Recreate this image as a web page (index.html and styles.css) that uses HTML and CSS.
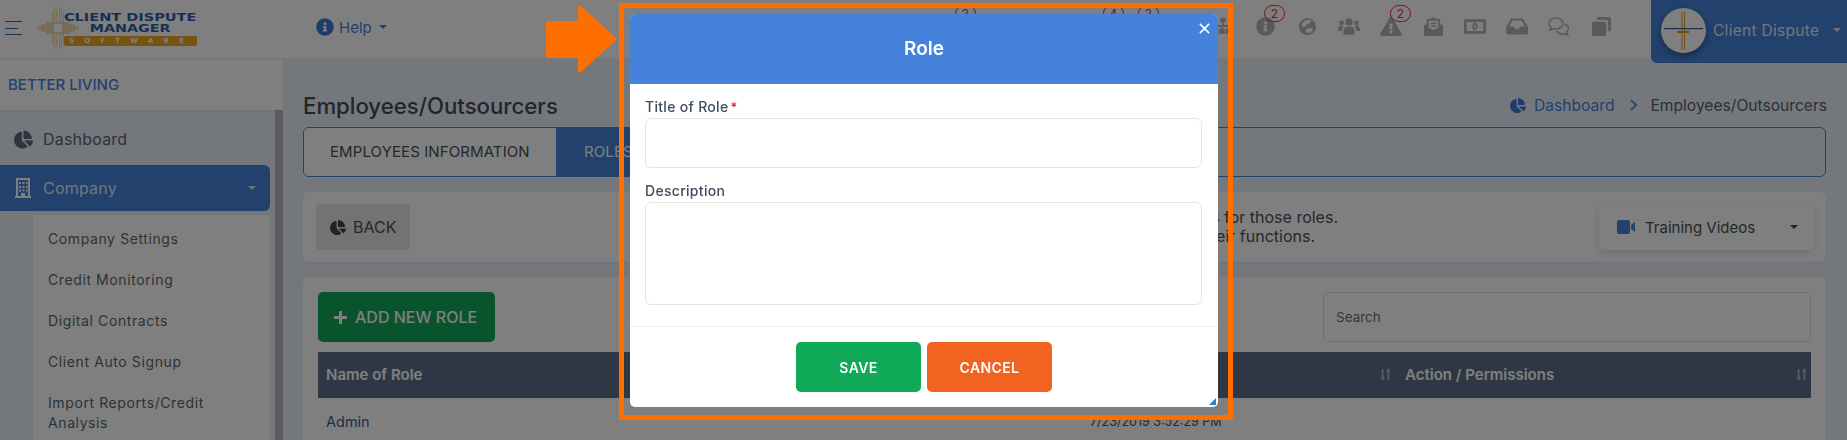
FILE: index.html
```html
<!DOCTYPE html>
<html lang="en">
<head>
<meta charset="utf-8">
<title>Employees/Outsourcers</title>
<link rel="stylesheet" href="styles.css">
</head>
<body>
<svg class="defs" aria-hidden="true">
  <symbol id="pie" viewBox="0 0 544 512"><path d="M527.79 288H290.5l158.03 158.03c6.04 6.04 15.98 6.53 22.19.68 38.7-36.46 65.32-85.61 73.13-140.86 1.34-9.46-6.51-17.85-16.06-17.85zm-15.83-64.8C503.72 103.74 408.26 8.28 288.8.04 279.68-.59 272 7.1 272 16.24V240h223.77c9.14 0 16.82-7.68 16.19-16.8zM224 288V50.71c0-9.55-8.39-17.4-17.84-16.06C86.99 51.49-4.1 155.6.14 280.37 4.5 408.51 114.83 513.59 243.03 511.98c50.4-.63 96.97-16.87 135.26-44.03 7.9-5.6 8.42-17.23 1.57-24.08L224 288z"/></symbol>
  <symbol id="info" viewBox="0 0 512 512"><path d="M256 8C119.043 8 8 119.083 8 256c0 136.997 111.043 248 248 248s248-111.003 248-248C504 119.083 392.957 8 256 8zm0 110c23.196 0 42 18.804 42 42s-18.804 42-42 42-42-18.804-42-42 18.804-42 42-42zm56 254c0 6.627-5.373 12-12 12h-88c-6.627 0-12-5.373-12-12v-24c0-6.627 5.373-12 12-12h12v-64h-12c-6.627 0-12-5.373-12-12v-24c0-6.627 5.373-12 12-12h64c6.627 0 12 5.373 12 12v100h12c6.627 0 12 5.373 12 12v24z"/></symbol>
  <symbol id="warn" viewBox="0 0 576 512"><path d="M569.517 440.013C587.975 472.007 564.806 512 527.94 512H48.054c-36.937 0-59.999-40.055-41.577-71.987L246.423 23.985c18.467-32.009 64.72-31.951 83.154 0l239.94 416.028zM288 354c-25.405 0-46 20.595-46 46s20.595 46 46 46 46-20.595 46-46-20.595-46-46-46zm-43.673-165.346l7.418 136c.347 6.364 5.609 11.346 11.982 11.346h48.546c6.373 0 11.635-4.982 11.982-11.346l7.418-136c.375-6.874-5.098-12.654-11.982-12.654h-63.383c-6.884 0-12.356 5.78-11.981 12.654z"/></symbol>
  <symbol id="sort" viewBox="0 0 14 14"><path d="M3 1h2v9h2L4 14 1 10h2zM10 0l3 4h-2v9H9V4H7z"/></symbol>
</svg>

<div class="app">
  <header class="topbar">
    <div class="burger"><i></i><i class="short"></i><i></i></div>
    <div class="logo">
      <svg class="logo-star" viewBox="0 0 42 42" width="42" height="42">
        <g fill="#efd9ae">
          <rect x="17" y="0" width="1" height="42"/><rect x="19" y="2" width="1" height="38"/><rect x="22" y="2" width="1" height="38"/><rect x="24" y="0" width="1" height="42"/>
          <rect x="15" y="5" width="1" height="32"/><rect x="26" y="5" width="1" height="32"/>
          <rect x="0" y="19.500" width="42" height="3"/><rect x="4" y="17.500" width="34" height="7"/><rect x="9" y="15" width="24" height="12"/>
        </g>
        <rect x="17" y="17" width="8" height="8" fill="#fff"/>
      </svg>
      <div class="logo-words">
        <span class="logo-line">CLIENT DISPUTE</span>
        <span class="logo-line logo-second">MANAGER</span>
        <span class="logo-bar">SOFTWARE</span>
      </div>
    </div>
    <div class="help">
      <svg class="help-icon"><use href="#info"/></svg>
      <span>Help</span>
      <b class="caret"></b>
    </div>
    <div class="hdr-icons">
      <span class="hi hi-a"><em class="badge">2</em></span>
      <span class="hi hi-b"><em class="badge">4</em></span>
      <span class="hi"><em class="badge">2</em></span>
      <span class="hi"></span>
      <span class="hi">
        <svg class="ic ic-s" viewBox="0 0 20 20"><path d="M7 1h6v5h-2v3h6v4h2v6h-6v-6h2v-2h-5v2h2v6H6v-6h2v-2H3v2h2v6h-6v-6h2V9h8V6H7z"/></svg>
      </span>
      <span class="hi">
        <svg class="ic"><use href="#info"/></svg><em class="badge">2</em>
      </span>
      <span class="hi">
        <svg class="ic" viewBox="0 0 20 20"><path fill-rule="evenodd" d="M10 1a9 9 0 1 0 0 18 9 9 0 0 0 0-18zM7 4l4-1 3 1-2 3-3 1-1 2-3 1-1-2 1-3zm1 9 5-2 3 2-2 3-3 1-3-2z"/></svg>
      </span>
      <span class="hi">
        <svg class="ic ic-w" viewBox="0 0 24 20"><circle cx="12" cy="5" r="4"/><circle cx="4" cy="6" r="2.600"/><circle cx="20" cy="6" r="2.600"/><path d="M6 19v-4c0-3 2-5 6-5s6 2 6 5v4zM0 14c0-3 1-5 4-5l2 1c-1 1-2 3-2 5H0zM24 14c0-3-1-5-4-5l-2 1c1 1 2 3 2 5h4z"/></svg>
      </span>
      <span class="hi">
        <svg class="ic ic-w"><use href="#warn"/></svg><em class="badge">2</em>
      </span>
      <span class="hi">
        <svg class="ic" viewBox="0 0 20 20"><path fill-rule="evenodd" d="M10 0l3 2h4v5l3 2v11H0V9l3-2V2h4zM5 4v7l5 3 5-3V4zm2 2h6v1.500H7zm0 3h6v1.500H7z"/></svg>
      </span>
      <span class="hi">
        <svg class="ic ic-w" viewBox="0 0 24 16"><path fill-rule="evenodd" d="M0 0h24v16H0zm3 3v10h18V3zm9 1c2 0 3 2 3 4s-1 4-3 4-3-2-3-4 1-4 3-4zm0 2c-.7 0-1 1-1 2s.3 2 1 2 1-1 1-2-.3-2-1-2z"/></svg>
      </span>
      <span class="hi">
        <svg class="ic ic-w" viewBox="0 0 22 16"><path d="M5 0h12l5 9v5a2 2 0 0 1-2 2H2a2 2 0 0 1-2-2V9zm1.500 2L3 8h5l1.500 2.500h3L14 8h5l-3.500-6z"/></svg>
      </span>
      <span class="hi">
        <svg class="ic-line" viewBox="0 0 22 20"><path d="M8 1c4 0 7 2.500 7 5.500S12 12 8 12c-1 0-2 0-3-.5L2 13l1-3C2 9 1 8 1 6.500 1 3.500 4 1 8 1z"/><path d="M16.500 7c2.500 1 4 2.500 4 4.500 0 1.500-.8 2.500-1.800 3.500l1 3-3.200-1.500c-3 1-6 0-7.500-2.500"/></svg>
      </span>
      <span class="hi">
        <svg class="ic" viewBox="0 0 20 20"><path d="M6 0h12a2 2 0 0 1 2 2v11a2 2 0 0 1-2 2h-1V6a3 3 0 0 0-3-3H5V1zM2 5h11a2 2 0 0 1 2 2v11a2 2 0 0 1-2 2H2a2 2 0 0 1-2-2V7a2 2 0 0 1 2-2z"/></svg>
      </span>
    </div>
    <div class="profile">
      <div class="avatar">
        <svg viewBox="0 0 45 45" width="45" height="45">
          <rect x="20.500" y="4" width="1" height="38" fill="#e0a020"/><rect x="23" y="4" width="1" height="38" fill="#e0a020"/>
          <rect x="3" y="20" width="39" height="1.200" fill="#3b5c94"/><rect x="16" y="23" width="12" height="2" fill="#e0a020"/>
        </svg>
      </div>
      <span class="profile-name">Client Dispute</span>
      <b class="caret caret-light"></b>
    </div>
  </header>

  <div class="below">
    <aside class="side">
      <div class="side-brand">BETTER LIVING</div>
      <div class="side-body">
        <nav class="side-nav">
          <a class="nav-item"><svg class="nav-ic"><use href="#pie"/></svg>Dashboard</a>
          <a class="nav-item nav-active">
            <svg class="nav-ic" viewBox="0 0 16 20"><path fill-rule="evenodd" d="M1 0h14v18h1v2H0v-2h1zm2 2v16h3v-3h4v3h3V2zm1 2h2v2H4zm3.500 0h2v2h-2zM11 4h1.500v2H11zM4 8h2v2H4zm3.500 0h2v2h-2zM11 8h1.500v2H11zM4 11.500h2v2H4zm3.500 0h2v2h-2zm3.500 0h1.500v2H11z"/></svg>
            Company<b class="caret caret-light nav-caret"></b>
          </a>
          <div class="sub">
            <a>Company Settings</a>
            <a>Credit Monitoring</a>
            <a>Digital Contracts</a>
            <a>Client Auto Signup</a>
            <a>Import Reports/Credit Analysis</a>
          </div>
        </nav>
        <div class="scrollbar"></div>
      </div>
    </aside>

    <main class="main">
      <div class="title-row">
        <h1>Employees/Outsourcers</h1>
        <div class="crumbs">
          <svg class="crumb-ic"><use href="#pie"/></svg>
          <a>Dashboard</a>
          <svg class="crumb-sep" viewBox="0 0 7 12"><path d="M1 1l5 5-5 5"/></svg>
          <span>Employees/Outsourcers</span>
        </div>
      </div>
      <div class="tabs">
        <a class="tab">EMPLOYEES INFORMATION</a>
        <a class="tab tab-on">ROLES</a>
      </div>
      <section class="card card-top">
        <button class="back"><svg class="back-ic"><use href="#pie"/></svg>BACK</button>
        <div class="note">
          <span>Create roles for your employees and set permissions for those roles.</span>
          <span class="note-second">Assign employees to roles according to their functions.</span>
        </div>
        <div class="training">
          <svg class="video" viewBox="0 0 18 14"><path d="M0 2a2 2 0 0 1 2-2h9a2 2 0 0 1 2 2v10a2 2 0 0 1-2 2H2a2 2 0 0 1-2-2zM14 5l4-3v10l-4-3z"/></svg>
          <span>Training Videos</span>
          <b class="caret caret-dark"></b>
        </div>
      </section>
      <section class="card card-list">
        <div class="list-tools">
          <button class="add"><svg class="plus" viewBox="0 0 13 13"><path d="M5 0h3v5h5v3H8v5H5V8H0V5h5z"/></svg>ADD NEW ROLE</button>
          <div class="search">Search</div>
        </div>
        <div class="grid grid-head">
          <div class="cell">Name of Role</div>
          <div class="cell">Created Date<svg class="sort sort-mid"><use href="#sort"/></svg></div>
          <div class="cell cell-action">Action / Permissions<svg class="sort"><use href="#sort"/></svg></div>
        </div>
        <div class="grid grid-row">
          <div class="cell link">Admin</div>
          <div class="cell cell-date">7/23/2019 3:52:29 PM</div>
          <div class="cell"></div>
        </div>
      </section>
    </main>
  </div>
</div>

<div class="backdrop"></div>

<div class="highlight"></div>
<svg class="arrow" viewBox="0 0 71 68" width="71" height="68"><path d="M0 16h32V2c0-2 2-2.500 3-1l36 33-36 33c-1 1.500-3 1-3-1V53H0z"/></svg>

<div class="modal">
  <div class="modal-head">
    <h2>Role</h2>
    <svg class="close" viewBox="0 0 12 12"><path d="M1 1l10 10M11 1L1 11"/></svg>
  </div>
  <form class="modal-body">
    <label class="lbl">Title of Role<span class="req">*</span></label>
    <div class="field field-input"></div>
    <label class="lbl lbl-next">Description</label>
    <div class="field field-area"></div>
  </form>
  <div class="modal-foot">
    <button class="btn btn-save">SAVE</button>
    <button class="btn btn-cancel">CANCEL</button>
  </div>
  <svg class="resize" viewBox="0 0 8 8"><path d="M8 0v8H0z"/></svg>
</div>
</body>
</html>
```

FILE: styles.css
```css
* { box-sizing: border-box; }
html, body { margin: 0; height: 440px; overflow: hidden; }
body { font-family: Inter, "Liberation Sans", sans-serif; color: #4a4f57; background: #e9f1f8; font-size: 14px; }
h1, h2 { margin: 0; font-weight: 500; }
a { display: block; }
button { font-family: inherit; border: 0; }
.defs { position: absolute; width: 0; height: 0; }

.app { height: 440px; display: flex; flex-direction: column; }

/* top bar */
.topbar { height: 60px; flex: none; display: flex; background: #fff; border-bottom: 2px solid #eceef0; position: relative; z-index: 2; }
.burger { width: 17px; flex: none; margin: 21px 0 0 5px; display: flex; flex-direction: column; gap: 5.500px; }
.burger i { display: block; height: 1px; background: #3568b5; }
.burger .short { width: 13px; }
.logo { margin: 7px 0 0 15px; width: 160px; flex: none; display: flex; height: 42px; }
.logo-star { flex: none; }
.logo-words { margin-left: -15px; padding-top: 5px; width: 133px; flex: none; display: flex; flex-direction: column; align-items: center; font-family: "DejaVu Sans", sans-serif; font-weight: 700; color: #2f5fa8; }
.logo-line { font-size: 11px; line-height: 11px; transform: scaleX(1.320); white-space: nowrap; }
.logo-second { transform: scaleX(1.300); }
.logo-bar { margin-top: 2px; width: 133px; height: 10px; border-radius: 2px; background: #f0a51e; color: #fff; font-size: 7px; line-height: 10px; letter-spacing: 10.200px; padding-left: 5px; white-space: nowrap; }
.help { display: flex; align-items: center; height: 54px; margin-left: 119px; color: #4582db; font-size: 15px; flex: none; }
.help-icon { width: 18px; height: 18px; fill: #3f7bd6; margin-right: 5px; }
.caret { display: inline-block; width: 0; height: 0; border: 4px solid transparent; border-top: 4px solid #4582db; border-bottom: 0; margin-left: 7px; }
.caret-light { border-top-color: #dfe7f3; }
.caret-dark { border-top-color: #4a4f57; }

.hdr-icons { flex: 1; display: flex; justify-content: flex-end; align-items: flex-start; height: 54px; padding: 17px 29px 0 0; }
.hi { position: relative; display: flex; justify-content: center; width: 42px; height: 20px; flex: none; }
.hi-a { width: 148px; }
.hi-b { width: 35px; }
.ic { width: 19px; height: 19px; fill: #b4b4b4; display: block; }
.ic-w { width: 22px; }
.ic-s { width: 18px; height: 18px; }
.ic-line { width: 22px; height: 20px; fill: none; stroke: #b4b4b4; stroke-width: 1.500; }
.badge { position: absolute; left: 20px; top: -12px; width: 21px; height: 17px; border: 1px solid #e02f36; border-radius: 9px; color: #e02f36; font-style: normal; font-size: 12px; line-height: 15px; text-align: center; }

.profile { flex: none; width: 196px; height: 63px; display: flex; align-items: center; padding: 0 8px 3px 10px; background: #4582db; border-radius: 0 0 0 6px; color: #e4ebf6; font-size: 15.500px; }
.avatar { width: 45px; height: 45px; border-radius: 50%; background: #fff; overflow: hidden; box-shadow: 0 3px 6px rgba(0,0,0,.35); flex: none; margin-right: 7px; }
.avatar svg { display: block; }
.profile-name { white-space: nowrap; letter-spacing: .3px; }
.profile .caret { margin-left: 14px; }

/* body */
.below { flex: 1; display: flex; min-height: 0; overflow: hidden; }
.side { width: 283px; flex: none; display: flex; flex-direction: column; }
.side-brand { height: 50px; flex: none; background: #fff; color: #4582db; font-weight: 500; font-size: 15px; line-height: 50px; padding-left: 8px; box-shadow: 0 1px 3px rgba(0,0,0,.08); }
.side-body { flex: 1; display: flex; min-height: 0; }
.side-nav { flex: 1; padding-top: 6px; }
.scrollbar { width: 8px; background: #b6b6b6; }
.nav-item { height: 46px; width: 270px; display: flex; align-items: center; font-size: 16px; letter-spacing: .2px; color: #5d646d; padding-left: 14px; }
.nav-ic { width: 19px; height: 19px; fill: #5d6a78; margin-right: 10px; flex: none; }
.nav-active { margin-top: 3px; background: #4582db; color: #e4ebf6; border-radius: 0 6px 6px 0; }
.nav-active .nav-ic { width: 16px; height: 20px; margin: 0 12px 0 1px; fill: #fff; }
.nav-caret { margin-left: auto; margin-right: 14px; }
.sub { margin: 4px 0 0 33px; width: 237px; background: #fff; padding-top: 4px; height: 300px; }
.sub a { padding: 10px 30px 11px 15px; font-size: 14px; letter-spacing: .6px; line-height: 20px; color: #5d646d; }

.main { flex: 1; min-width: 0; padding: 31px 21px 0 20px; }
.title-row { display: flex; justify-content: space-between; align-items: center; height: 28px; }
h1 { font-size: 22.200px; color: #454a52; }
.crumbs { display: flex; align-items: center; font-size: 15.600px; color: #5a5f66; margin-right: -1px; }
.crumbs a { color: #4582db; }
.crumb-ic { width: 16px; height: 15px; fill: #3f7bd6; margin-right: 8px; }
.crumb-sep { width: 7px; height: 12px; margin: 0 13px 0 16px; fill: none; stroke: #4582db; stroke-width: 1.600; }
.tabs { margin-top: 8px; height: 50px; border: 1px solid #4582db; border-radius: 6px; display: flex; overflow: hidden; font-size: 15px; letter-spacing: .1px; }
.tab { padding: 0 26px; line-height: 48px; white-space: nowrap; }
.tab.tab-on { background: #4582db; color: #fff; padding: 0 28px; }
.tab:first-child { width: 252px; background: #fff; color: #4a4f57; }

.card { background: #fff; border-radius: 6px; margin-top: 15px; box-shadow: 0 1px 3px rgba(0,0,0,.05); }
.card-top { height: 70px; display: flex; align-items: center; padding: 0 12px 0 13px; }
.back { width: 94px; height: 46px; background: #e6e6e6; border-radius: 4px; display: flex; align-items: center; padding: 0 0 0 14px; font-size: 16px; color: #4a4f57; flex: none; }
.back-ic { width: 16px; height: 15px; fill: #3d4652; margin-right: 7px; }
.note { margin-left: auto; display: flex; flex-direction: column; align-items: flex-end; font-size: 16px; line-height: 19.500px; white-space: nowrap; }
.note-second { padding-right: 23px; }
.training { flex: none; margin-left: 261px; width: 215px; height: 46px; border-radius: 6px; background: #fff; box-shadow: 0 3px 10px rgba(0,0,0,.14); display: flex; align-items: center; padding-left: 18px; font-size: 15px; }
.video { width: 18px; height: 14px; fill: #4582db; margin-right: 10px; flex: none; }
.training .caret { margin-left: 35px; }
.card-list { height: 300px; padding: 15px; }
.list-tools { display: flex; justify-content: space-between; height: 50px; }
.add { width: 177px; height: 50px; border-radius: 5px; background: #10a958; color: #fff; font-size: 16px; font-weight: 500; display: flex; align-items: center; padding-left: 16px; gap: 8px; white-space: nowrap; }
.plus { width: 13px; height: 13px; fill: #fff; flex: none; }
.search { width: 488px; border: 1px solid #dfdfdf; border-radius: 6px; line-height: 48px; padding-left: 12px; font-size: 13.500px; color: #6e6e6e; }
.grid { display: grid; grid-template-columns: 764px 316px 1fr; }
.grid-head { margin-top: 10px; height: 46px; background: #606f88; color: #fff; font-weight: 600; font-size: 15px; line-height: 46px; }
.cell { position: relative; padding-left: 8px; }
.grid-head .cell-action { padding-left: 7px; }
.sort { position: absolute; right: 3px; top: 16px; width: 13px; height: 13px; fill: #aab2c0; }
.sort-mid { right: 6px; }
.grid-row { height: 46px; line-height: 48px; font-size: 14.500px; }
.cell-date { font-size: 12.500px; }
.link { color: #3a5c92; }

/* dim layer */
.backdrop { position: fixed; inset: 0; background: rgba(0,0,0,.5); z-index: 5; }
.highlight { position: absolute; left: 619px; top: 3px; width: 614px; height: 417px; border: 5px solid #ff6f00; z-index: 6; }
.arrow { position: absolute; left: 546px; top: 5px; z-index: 6; fill: #ff6f00; }

/* modal */
.modal { position: absolute; left: 630px; top: 14px; width: 588px; height: 393px; background: #fff; border-radius: 5px; z-index: 7; overflow: hidden; display: flex; flex-direction: column; }
.modal-head { height: 70px; flex: none; background: #4582db; color: #fff; position: relative; text-align: center; }
.modal-head h2 { font-size: 19px; font-weight: 600; line-height: 70px; }
.close { position: absolute; right: 8px; top: 9px; width: 11px; height: 11px; stroke: #fff; stroke-width: 1.800; }
.modal-body { height: 243px; flex: none; padding: 14px 16px 0 15px; border-bottom: 1px solid #eee; }
.lbl { display: block; height: 20px; line-height: 18px; font-size: 14px; letter-spacing: .3px; font-weight: 500; color: #3f4b5e; }
.req { color: #e8112d; font-size: 13px; margin-left: 2px; }
.lbl-next { margin-top: 14px; }
.field { border: 1px solid #e4e4e4; border-radius: 6px; background: #fff; }
.field-input { height: 50px; }
.field-area { height: 103px; }
.modal-foot { flex: 1; display: flex; justify-content: center; gap: 6px; padding-top: 15px; }
.btn { width: 125px; height: 50px; border-radius: 5px; color: #fff; font-size: 14px; font-weight: 600; letter-spacing: .4px; }
.btn-save { background: #10a958; }
.btn-cancel { background: #f26322; }
.resize { position: absolute; right: 2px; bottom: 2px; width: 7px; height: 7px; fill: #2a7fc9; }
```
